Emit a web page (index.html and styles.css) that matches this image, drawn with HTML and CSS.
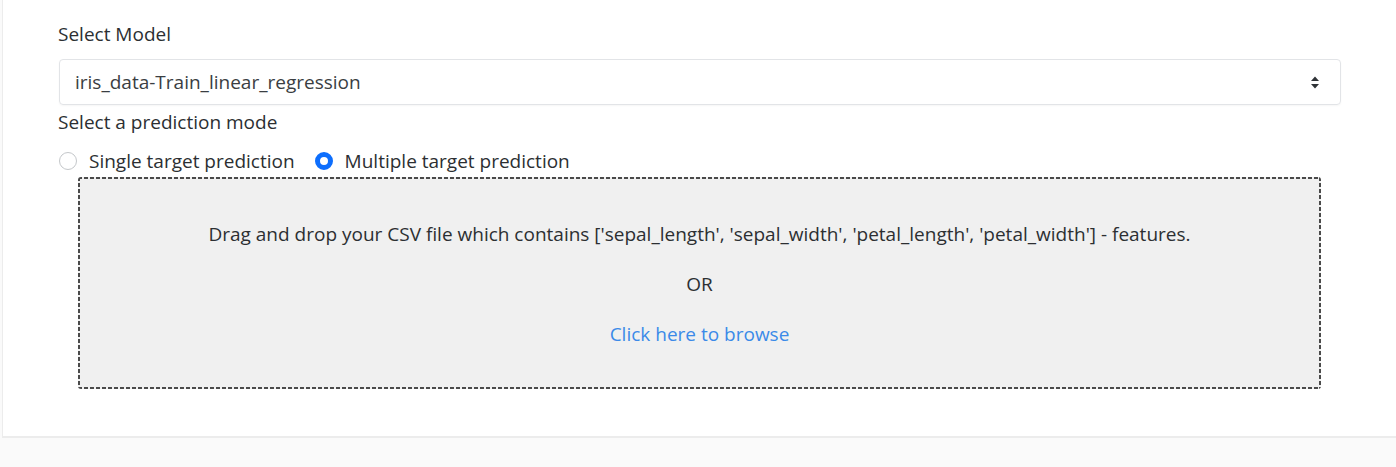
FILE: index.html
```html
<!DOCTYPE html>
<html lang="en">
<head>
<meta charset="utf-8">
<title>Predict</title>
<link rel="stylesheet" href="styles.css">
</head>
<body>
<div class="card">
  <div class="form-group">
    <label class="label" for="model">Select Model</label>
    <div class="select" id="model">
      <span class="select-value">iris_data-Train_linear_regression</span>
      <svg class="select-arrows" width="10" height="15" viewBox="0 0 10 15"><path d="M5 1.5 L9 6 H1 Z M5 13.5 L9 9 H1 Z" fill="#2f3337"/></svg>
    </div>
  </div>
  <div class="label mode-label">Select a prediction mode</div>
  <div class="radios">
    <label class="radio"><span class="radio-dot"></span><span>Single target prediction</span></label>
    <label class="radio"><span class="radio-dot checked"></span><span>Multiple target prediction</span></label>
  </div>
  <div class="dropzone">
    <p>Drag and drop your CSV file which contains ['sepal_length', 'sepal_width', 'petal_length', 'petal_width'] - features.</p>
    <p>OR</p>
    <p class="browse">Click here to browse</p>
  </div>
</div>
</body>
</html>
```
FILE: styles.css
```css
html, body {
  margin: 0;
  padding: 0;
  overflow: hidden;
}
body {
  background: #fafafa;
  font-family: "Open Sans", "Liberation Sans", sans-serif;
  font-size: 19px;
  line-height: 28px;
  color: #2c2f32;
  width: 1396px;
  height: 467px;
}
.card {
  margin-left: 2px;
  background: #ffffff;
  border-left: 1px solid #ececec;
  border-bottom: 2px solid #ececec;
  padding: 20px 55px 0 55px;
  box-sizing: border-box;
  height: 438px;
}
.label {
  display: block;
  margin-bottom: 11px;
}
.select {
  height: 46px;
  box-sizing: border-box;
  border: 1px solid #e2e4e7;
  border-radius: 4px;
  box-shadow: 0 1px 2px rgba(0, 0, 0, 0.04);
  display: flex;
  align-items: center;
  justify-content: space-between;
  padding: 0 20px 0 15px;
  margin-left: 1px;
}
.select-value {
  color: #3a3e42;
}
.mode-label {
  margin-top: 3px;
  margin-bottom: 11px;
}
.radios {
  display: flex;
  gap: 20px;
  margin-left: 1px;
}
.radio {
  display: flex;
  align-items: center;
  gap: 12px;
}
.radio-dot {
  width: 18px;
  height: 18px;
  box-sizing: border-box;
  border-radius: 50%;
  border: 1px solid #c4c7ca;
  background: #fff;
}
.radio-dot.checked {
  border: 5px solid #0d6efd;
}
.dropzone {
  margin: 2px 20px 0 20px;
  height: 212px;
  box-sizing: border-box;
  background-color: #f0f0f0;
  background-image:
    repeating-linear-gradient(90deg, #4a4a4a 0 4px, transparent 4px 6px),
    repeating-linear-gradient(90deg, #4a4a4a 0 4px, transparent 4px 6px),
    repeating-linear-gradient(180deg, #4a4a4a 0 4px, transparent 4px 6px),
    repeating-linear-gradient(180deg, #4a4a4a 0 4px, transparent 4px 6px);
  background-size: 100% 2px, 100% 2px, 2px 100%, 2px 100%;
  background-position: left top, left bottom, left top, right top;
  background-repeat: no-repeat;
  border-radius: 3px;
  padding-top: 43px;
  text-align: center;
  display: flex;
  flex-direction: column;
  gap: 22px;
}
.dropzone p {
  margin: 0;
}
.browse {
  color: #3b8ae8;
}
```
